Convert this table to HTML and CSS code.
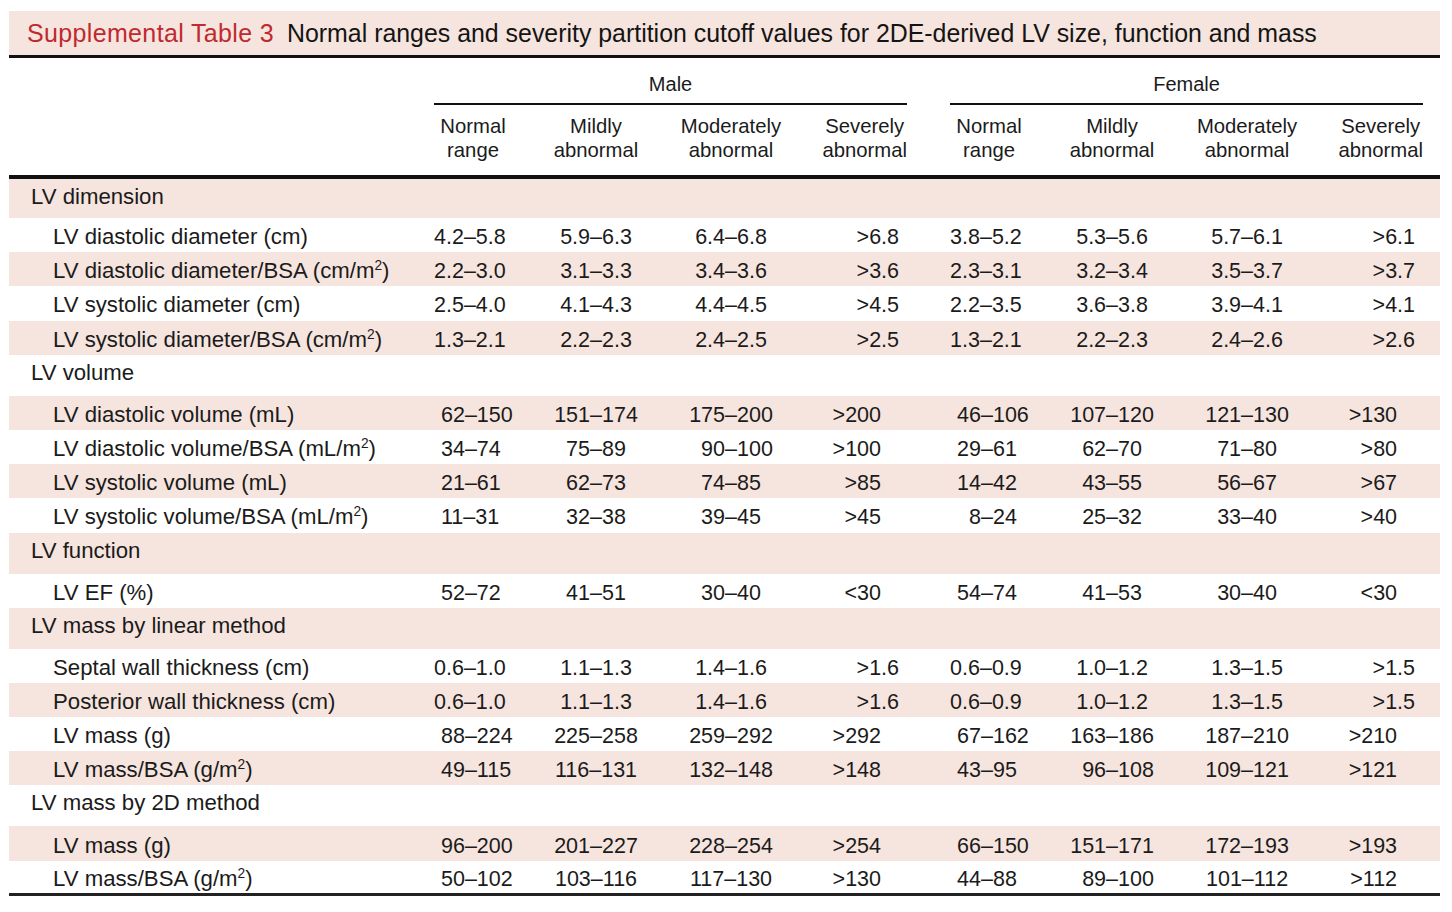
FILE: index.html
```html
<!DOCTYPE html>
<html lang="en">
<head>
<meta charset="utf-8">
<title>Supplemental Table 3</title>
<link rel="stylesheet" href="styles.css">
</head>
<body>
<div class="page">
  <div class="caption">
    <span class="cap-label">Supplemental Table 3</span>
    <span class="cap-text">Normal ranges and severity partition cutoff values for 2DE-derived LV size, function and mass</span>
  </div>
  <table class="ranges">
    <colgroup>
      <col class="c-label">
      <col class="c1"><col class="c2"><col class="c3"><col class="c4">
      <col class="c-gap">
      <col class="c1"><col class="c2"><col class="c3"><col class="c4">
      <col class="c-end">
    </colgroup>
    <thead>
      <tr class="group-row">
        <th></th>
        <th colspan="4" class="group">Male</th>
        <th></th>
        <th colspan="4" class="group">Female</th>
        <th></th>
      </tr>
      <tr class="col-row">
        <th></th>
        <th class="h">Normal<br>range</th>
        <th class="h">Mildly<br>abnormal</th>
        <th class="h">Moderately<br>abnormal</th>
        <th class="h hr"><span>Severely<br>abnormal</span></th>
        <th></th>
        <th class="h">Normal<br>range</th>
        <th class="h">Mildly<br>abnormal</th>
        <th class="h">Moderately<br>abnormal</th>
        <th class="h hr"><span>Severely<br>abnormal</span></th>
        <th></th>
      </tr>
    </thead>
    <tbody>
      <tr class="cat shade"><td colspan="11">LV dimension</td></tr>
      <tr class="row dec"><td class="lab">LV diastolic diameter (cm)</td><td class="v1">4.2–5.8</td><td class="v2">5.9–6.3</td><td class="v3">6.4–6.8</td><td class="v4">&gt;6.8</td><td></td><td class="v1">3.8–5.2</td><td class="v2">5.3–5.6</td><td class="v3">5.7–6.1</td><td class="v4">&gt;6.1</td><td></td></tr>
      <tr class="row dec shade"><td class="lab">LV diastolic diameter/BSA (cm/m<sup>2</sup>)</td><td class="v1">2.2–3.0</td><td class="v2">3.1–3.3</td><td class="v3">3.4–3.6</td><td class="v4">&gt;3.6</td><td></td><td class="v1">2.3–3.1</td><td class="v2">3.2–3.4</td><td class="v3">3.5–3.7</td><td class="v4">&gt;3.7</td><td></td></tr>
      <tr class="row dec"><td class="lab">LV systolic diameter (cm)</td><td class="v1">2.5–4.0</td><td class="v2">4.1–4.3</td><td class="v3">4.4–4.5</td><td class="v4">&gt;4.5</td><td></td><td class="v1">2.2–3.5</td><td class="v2">3.6–3.8</td><td class="v3">3.9–4.1</td><td class="v4">&gt;4.1</td><td></td></tr>
      <tr class="row dec shade"><td class="lab">LV systolic diameter/BSA (cm/m<sup>2</sup>)</td><td class="v1">1.3–2.1</td><td class="v2">2.2–2.3</td><td class="v3">2.4–2.5</td><td class="v4">&gt;2.5</td><td></td><td class="v1">1.3–2.1</td><td class="v2">2.2–2.3</td><td class="v3">2.4–2.6</td><td class="v4">&gt;2.6</td><td></td></tr>

      <tr class="cat"><td colspan="11">LV volume</td></tr>
      <tr class="row int shade"><td class="lab">LV diastolic volume (mL)</td><td class="v1">62–150</td><td class="v2">151–174</td><td class="v3">175–200</td><td class="v4">&gt;200</td><td></td><td class="v1">46–106</td><td class="v2">107–120</td><td class="v3">121–130</td><td class="v4">&gt;130</td><td></td></tr>
      <tr class="row int"><td class="lab">LV diastolic volume/BSA (mL/m<sup>2</sup>)</td><td class="v1">34–74</td><td class="v2">75–89</td><td class="v3">&#8199;90–100</td><td class="v4">&gt;100</td><td></td><td class="v1">29–61</td><td class="v2">62–70</td><td class="v3">71–80</td><td class="v4">&gt;80</td><td></td></tr>
      <tr class="row int shade"><td class="lab">LV systolic volume (mL)</td><td class="v1">21–61</td><td class="v2">62–73</td><td class="v3">74–85</td><td class="v4">&gt;85</td><td></td><td class="v1">14–42</td><td class="v2">43–55</td><td class="v3">56–67</td><td class="v4">&gt;67</td><td></td></tr>
      <tr class="row int"><td class="lab">LV systolic volume/BSA (mL/m<sup>2</sup>)</td><td class="v1">11–31</td><td class="v2">32–38</td><td class="v3">39–45</td><td class="v4">&gt;45</td><td></td><td class="v1">&#8199;8–24</td><td class="v2">25–32</td><td class="v3">33–40</td><td class="v4">&gt;40</td><td></td></tr>

      <tr class="cat shade"><td colspan="11">LV function</td></tr>
      <tr class="row int"><td class="lab">LV EF (%)</td><td class="v1">52–72</td><td class="v2">41–51</td><td class="v3">30–40</td><td class="v4">&lt;30</td><td></td><td class="v1">54–74</td><td class="v2">41–53</td><td class="v3">30–40</td><td class="v4">&lt;30</td><td></td></tr>

      <tr class="cat shade"><td colspan="11">LV mass by linear method</td></tr>
      <tr class="row dec"><td class="lab">Septal wall thickness (cm)</td><td class="v1">0.6–1.0</td><td class="v2">1.1–1.3</td><td class="v3">1.4–1.6</td><td class="v4">&gt;1.6</td><td></td><td class="v1">0.6–0.9</td><td class="v2">1.0–1.2</td><td class="v3">1.3–1.5</td><td class="v4">&gt;1.5</td><td></td></tr>
      <tr class="row dec shade"><td class="lab">Posterior wall thickness (cm)</td><td class="v1">0.6–1.0</td><td class="v2">1.1–1.3</td><td class="v3">1.4–1.6</td><td class="v4">&gt;1.6</td><td></td><td class="v1">0.6–0.9</td><td class="v2">1.0–1.2</td><td class="v3">1.3–1.5</td><td class="v4">&gt;1.5</td><td></td></tr>
      <tr class="row int"><td class="lab">LV mass (g)</td><td class="v1">88–224</td><td class="v2">225–258</td><td class="v3">259–292</td><td class="v4">&gt;292</td><td></td><td class="v1">67–162</td><td class="v2">163–186</td><td class="v3">187–210</td><td class="v4">&gt;210</td><td></td></tr>
      <tr class="row int shade"><td class="lab">LV mass/BSA (g/m<sup>2</sup>)</td><td class="v1">49–115</td><td class="v2">116–131</td><td class="v3">132–148</td><td class="v4">&gt;148</td><td></td><td class="v1">43–95</td><td class="v2">&#8199;96–108</td><td class="v3">109–121</td><td class="v4">&gt;121</td><td></td></tr>

      <tr class="cat"><td colspan="11">LV mass by 2D method</td></tr>
      <tr class="row int shade"><td class="lab">LV mass (g)</td><td class="v1">96–200</td><td class="v2">201–227</td><td class="v3">228–254</td><td class="v4">&gt;254</td><td></td><td class="v1">66–150</td><td class="v2">151–171</td><td class="v3">172–193</td><td class="v4">&gt;193</td><td></td></tr>
      <tr class="row int last"><td class="lab">LV mass/BSA (g/m<sup>2</sup>)</td><td class="v1">50–102</td><td class="v2">103–116</td><td class="v3">117–130</td><td class="v4">&gt;130</td><td></td><td class="v1">44–88</td><td class="v2">&#8199;89–100</td><td class="v3">101–112</td><td class="v4">&gt;112</td><td></td></tr>
    </tbody>
  </table>
</div>
</body>
</html>
```
FILE: styles.css
```css
html, body {
  margin: 0;
  padding: 0;
  background: #ffffff;
}

body {
  font-family: "Liberation Sans", Arial, sans-serif;
  color: #1b1b1b;
}

.page {
  padding: 11px 12px 0 9px;
  width: 1431px;
}

.caption {
  background: #f6e4de;
  height: 44px;
  display: flex;
  align-items: center;
  gap: 13px;
  padding-left: 18px;
  border-bottom: 3px solid #111;
  font-size: 25px;
  white-space: nowrap;
}

.cap-label {
  color: #bf2a2f;
  letter-spacing: 0.35px;
}

.cap-text {
  color: #141414;
  font-size: 24.9px;
}

.ranges {
  width: 1431px;
  table-layout: fixed;
  border-collapse: collapse;
  border-spacing: 0;
}

.c-label { width: 425px; }
.c1 { width: 78px; }
.c2 { width: 168px; }
.c3 { width: 102px; }
.c4 { width: 125px; }
.c-gap { width: 43px; }
.c-end { width: 17px; }

.ranges th,
.ranges td {
  padding: 0;
  font-weight: normal;
  white-space: nowrap;
}

.group-row th {
  vertical-align: bottom;
}

.group {
  font-size: 20px;
  line-height: 24px;
  padding: 14px 0 7px 0 !important;
  border-bottom: 2px solid #111;
  text-align: center;
}

.col-row th {
  vertical-align: top;
  border-bottom: 4px solid #111;
}

.h {
  font-size: 20.3px;
  line-height: 24px;
  padding: 9px 0 13px 0 !important;
  text-align: center;
}

.hr {
  text-align: right;
}

.hr span {
  display: inline-block;
  text-align: center;
}

.ranges td {
  font-size: 21.5px;
}

.ranges td.lab,
.cat td {
  font-size: 22.2px;
}

.cat td {
  height: 41px;
  box-sizing: border-box;
  vertical-align: top;
  padding: 6px 0 0 22px;
  line-height: 24px;
}

.row td {
  height: 34.2px;
  box-sizing: border-box;
  padding-top: 4px;
  line-height: 24px;
  vertical-align: middle;
}

.shade td {
  background: #f6e4de;
}

.row .lab {
  padding-left: 44px;
}

.v1 { text-align: left; }
.int .v1 { padding-left: 7px; }

.v2, .v3 { text-align: center; }

.v4 { text-align: right; padding-right: 26px !important; }
.dec .v4 { padding-right: 8px !important; }

.last td {
  border-bottom: 3px solid #222;
}

sup {
  font-size: 0.62em;
  line-height: 0;
  vertical-align: 0.6em;
}
```
